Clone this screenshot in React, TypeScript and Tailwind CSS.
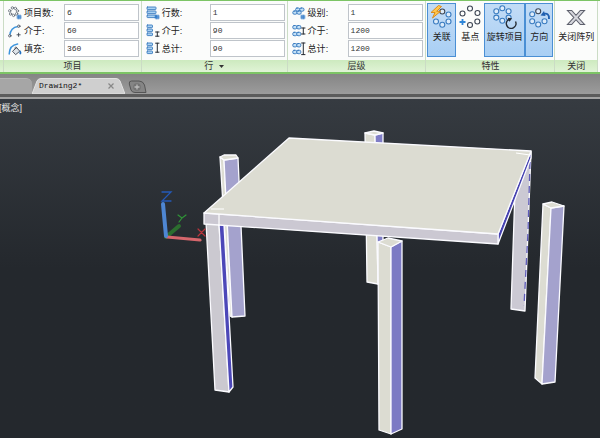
import React from 'react';

type Field = { id: string; label: string; value: string; icon: React.ReactNode };

const BLUE = '#3a7cc0';
const INK = '#3d4654';

// --- Small 14px field icons ---
const Icon = ({ children }: { children: React.ReactNode }) => (
  <svg viewBox="0 0 14 14" className="h-3.5 w-3.5 shrink-0" fill="none" strokeLinecap="round" aria-hidden="true">
    {children}
  </svg>
);

const Bars = ({ w = 8, ys = [1, 5, 9] }: { w?: number; ys?: number[] }) => (
  <>
    {ys.map((y) => (
      <rect key={y} x="1" y={y} width={w} height="2.6" rx="0.6" fill="#a9d2f2" stroke={BLUE} strokeWidth="0.9" />
    ))}
  </>
);

const Hash = ({ x, y }: { x: number; y: number }) => (
  <path d={`M${x + 1.2} ${y}v4M${x + 3} ${y}v4M${x} ${y + 1.1}h4.2M${x} ${y + 2.9}h4.2`} stroke="#1f6fc4" strokeWidth="0.9" />
);

const ItemCountIcon = () => (
  <Icon>
    {[[4.4, 1.9], [7.4, 2.4], [9.4, 4.9], [8.6, 7.8], [5.6, 9.4], [2.6, 8], [1.7, 4.8]].map(([cx, cy]) => (
      <circle key={`${cx}-${cy}`} cx={cx} cy={cy} r="1.2" stroke="#5b6470" strokeWidth="0.8" fill="#fff" />
    ))}
    <Hash x={9} y={9} />
  </Icon>
);

const BetweenIcon = () => (
  <Icon>
    <path d="M1.8 11.5C2.2 6.5 5 3 10 2.4" stroke="#3d95dd" strokeWidth="1.5" />
    <circle cx="1.8" cy="11.8" r="1.2" fill="#fff" stroke={INK} strokeWidth="0.8" />
    <circle cx="10.8" cy="2.2" r="1.2" fill="#fff" stroke={INK} strokeWidth="0.8" />
    <path d="M10.6 9.2v3.2M9 10.8h3.2" stroke={INK} strokeWidth="0.9" />
  </Icon>
);

const FillIcon = () => (
  <Icon>
    <path d="M1.2 12C1.4 6.5 4 2.8 9.6 2" stroke="#3d95dd" strokeWidth="1.5" />
    <path d="M4.8 9l3.8-3.4 3.2 3.6-3.9 3.2z" fill="#dfe5ea" stroke={INK} strokeWidth="0.9" />
    <path d="M7 6.6c-.4-2 1.6-2.4 2-.4" stroke={INK} strokeWidth="0.8" />
    <path d="M12.3 8.2c1.5 2 1.3 4.2 0 4.2s-1.200-2.200 0-4.200z" fill="#1f6fc4" />
  </Icon>
);

const IBeam = ({ y1, y2 }: { y1: number; y2: number }) => (
  <path d={`M9.6 ${y1}h3.4M9.6 ${y2}h3.4M11.3 ${y1}V${y2}`} stroke="#252b33" strokeWidth="1" />
);

const RowCountIcon = () => (
  <Icon>
    <Bars w={9} />
    <Hash x={9} y={9} />
  </Icon>
);
const RowBetweenIcon = () => (
  <Icon>
    <Bars w={5.5} />
    <IBeam y1={8} y2={12.2} />
  </Icon>
);
const RowTotalIcon = () => (
  <Icon>
    <Bars w={5.5} />
    <IBeam y1={1.2} y2={10.2} />
  </Icon>
);

const Links = ({ y }: { y: number }) => (
  <g fill="#c4e1f7" stroke={BLUE} strokeWidth="1">
    <rect x="0.8" y={y} width="4" height="3.4" rx="1.3" />
    <rect x="4.8" y={y} width="4" height="3.4" rx="1.3" />
  </g>
);

const LevelCountIcon = () => (
  <Icon>
    <g fill="#c4e1f7" stroke={BLUE} strokeWidth="1">
      <rect x="3.6" y="2" width="4.2" height="3.2" rx="1.4" />
      <rect x="7.8" y="2" width="4.2" height="3.2" rx="1.4" />
      <rect x="0.8" y="5" width="4.2" height="3.2" rx="1.4" />
      <rect x="5" y="5" width="4.2" height="3.2" rx="1.4" />
    </g>
    <Hash x={8.8} y={9} />
  </Icon>
);
const LevelBetweenIcon = () => (
  <Icon>
    <Links y={1.5} />
    <Links y={8.3} />
    <IBeam y1={4} y2={10} />
  </Icon>
);
const LevelTotalIcon = () => (
  <Icon>
    <Links y={1.5} />
    <Links y={8.3} />
    <IBeam y1={1} y2={12.6} />
  </Icon>
);

// --- Large 24px tool icons ---
const BigIcon = ({ children }: { children: React.ReactNode }) => (
  <svg viewBox="0 0 24 24" className="h-6 w-6 shrink-0" fill="none" aria-hidden="true">
    {children}
  </svg>
);

const Ring = ({ pts, color }: { pts: number[][]; color: string }) => (
  <>
    {pts.map(([cx, cy]) => (
      <circle key={`${cx}-${cy}`} cx={cx} cy={cy} r="2.5" stroke={color} strokeWidth="1.1" fill="#fff" fillOpacity="0.5" />
    ))}
  </>
);

const AssociateIcon = () => (
  <BigIcon>
    <Ring color={BLUE} pts={[[18.5, 9.5], [18.5, 16.5], [12.3, 19.7], [6, 16.5]]} />
    <Ring color={INK} pts={[[12.3, 6.5]]} />
    <path d="M8.500.5L1 7.500h4L2.500 13 10.500 6.300H6.700L11.500 1.500z" fill="#ffc74d" stroke="#d98512" strokeWidth="0.9" />
  </BigIcon>
);

const BasePointIcon = () => (
  <BigIcon>
    <Ring color={INK} pts={[[12, 3.5], [4.5, 8.5], [19.5, 8], [19.3, 16.5], [12, 20]]} />
    <path d="M4.5 14v6M1.5 17h6" stroke="#2f86d8" strokeWidth="1.8" />
  </BigIcon>
);

const RotateIcon = () => (
  <BigIcon>
    <Ring color={BLUE} pts={[[9.3, 3.3], [15.6, 6.3], [15.6, 12.6], [9.3, 15.8], [3.3, 12.6], [3.3, 6.3]]} />
    <path d="M15.800 14.400A4.800 4.800 0 1 0 22.500 16.500" stroke="#252b33" strokeWidth="1.5" />
    <path d="M14.500 12.800l4.600.4-2.600 3.600z" fill="#252b33" />
  </BigIcon>
);

const DirectionIcon = () => (
  <BigIcon>
    <Ring color={INK} pts={[[11.2, 6.2]]} />
    <Ring color={BLUE} pts={[[5.2, 9.3], [5.2, 16.3], [11.2, 19.5], [17.5, 16.3]]} />
    <path d="M22 14c.5-4.500-2-6.200-5.500-5" stroke="#1f5fb0" strokeWidth="1.9" />
    <path d="M13.500 10.500l3.500-4.500 1.500 5z" fill="#1f5fb0" />
  </BigIcon>
);

const CloseIcon = () => (
  <BigIcon>
    <path
      d="M3.5 5.500h4.200l4.300 4.800 4.300-4.800h4.200l-6.300 7 6.300 7h-4.200L12 14.700l-4.300 4.800H3.500l6.300-7z"
      fill="#d5d6dc"
      stroke="#5d606c"
      strokeWidth="1.1"
    />
  </BigIcon>
);

const itemFields: Field[] = [
  { id: 'items', label: '项目数', value: '6', icon: <ItemCountIcon /> },
  { id: 'item-between', label: '介于', value: '60', icon: <BetweenIcon /> },
  { id: 'item-fill', label: '填充', value: '360', icon: <FillIcon /> },
];

const rowFields: Field[] = [
  { id: 'rows', label: '行数', value: '1', icon: <RowCountIcon /> },
  { id: 'row-between', label: '介于', value: '90', icon: <RowBetweenIcon /> },
  { id: 'row-total', label: '总计', value: '90', icon: <RowTotalIcon /> },
];

const levelFields: Field[] = [
  { id: 'levels', label: '级别', value: '1', icon: <LevelCountIcon /> },
  { id: 'level-between', label: '介于', value: '1200', icon: <LevelBetweenIcon /> },
  { id: 'level-total', label: '总计', value: '1200', icon: <LevelTotalIcon /> },
];

const Caption = ({ children }: { children: React.ReactNode }) => (
  <div className="flex h-3 items-center justify-center gap-1.5 bg-linear-to-b from-[#cdeabf] to-[#e0f3d6] text-[9px] leading-3 text-[#333]">
    {children}
  </div>
);

const FieldRows = ({ fields, labelWidth = 'w-[42px]' }: { fields: Field[]; labelWidth?: string }) => (
  <div className="flex grow flex-col gap-px pt-[3px] pr-0.5 pl-1">
    {fields.map((f) => (
      <div key={f.id} className="flex h-[17px] items-center">
        {f.icon}
        <label htmlFor={f.id} className={`${labelWidth} shrink-0 pl-0.5 text-[9px] leading-3 whitespace-nowrap text-[#222]`}>
          {f.label}:
        </label>
        <input
          id={f.id}
          defaultValue={f.value}
          className="h-[17px] w-0 min-w-0 grow border border-[#bfc4ca] bg-white px-0.5 font-['Liberation_Mono',monospace] text-[8px] text-[#333] outline-none"
        />
      </div>
    ))}
  </div>
);

const ToolButton = ({ label, icon, active = false }: { label: string; icon: React.ReactNode; active?: boolean }) => (
  <button
    type="button"
    className={`flex h-[54px] grow flex-col items-center border pt-px text-[9px] leading-3 whitespace-nowrap text-[#222] ${
      active ? 'border-[#4a8fd4] bg-linear-to-b from-[#c3dcf6] to-[#a9cff4]' : 'border-transparent'
    }`}
  >
    {icon}
    <span className="mt-0.5">{label}</span>
  </button>
);

const Leg = ({ points, fill }: { points: string; fill: string }) => (
  <polygon points={points} fill={fill} stroke="#fbfbff" strokeWidth="1.3" strokeLinejoin="round" />
);

const Scene = () => (
  <svg viewBox="0 99 600 339" className="h-full w-full" role="img" aria-label="Table model">
    {/* rear legs */}
    <Leg points="220,157 224,160 232,317 230,316" fill="#dcdcd2" />
    <Leg points="224,160 238,158 245,316 232,317" fill="#a4a2cd" />
    <Leg points="220,157 224,155 236,155 238,158 224,160" fill="#dcdcd2" />
    <Leg points="365,133 375,135 378,284 367,282" fill="#dcdcd2" />
    <Leg points="375,135 383,133 383,284 378,284" fill="#7f7dc6" />
    <Leg points="365,133 374,131 383,133 375,135" fill="#dcdcd2" />
    <Leg points="531,152 525,311 511,309 515,190" fill="#cbc9d3" />
    <path d="M530 162L528 232L524 306" stroke="#5e5bb9" strokeWidth="1.3" strokeDasharray="7 5" fill="none" />

    {/* front left leg */}
    <Leg points="206,222 219,224 229,392 215,390" fill="#cbc9d0" />
    <Leg points="219,224 224,225 233,387 229,392" fill="#4c47b8" />

    {/* table top */}
    <Leg points="531,151 531,158 498,244 498,234" fill="#4642b0" />
    <Leg points="204,213 498,234 498,244 204,224" fill="#cbc8d2" />
    <Leg points="289,138 531,151 498,234 204,213" fill="#dcdcd2" />
    <path d="M211 209H224M219 214V226M516 153L530 155" stroke="#fff" strokeWidth="1.2" fill="none" />

    {/* front legs */}
    <Leg points="378,242 391,247 391,434 379,430" fill="#dcdcd2" />
    <Leg points="391,247 402,241 402,429 391,434" fill="#7c7ac4" />
    <Leg points="378,242 388,238 402,241 391,247" fill="#dcdcd2" />
    <Leg points="543,204 551,208 542,384 535,378" fill="#dcdcd2" />
    <Leg points="551,208 564,206 555,382 542,384" fill="#a4a2cd" />
    <Leg points="543,204 552,202 564,206 551,208" fill="#dcdcd2" />

    {/* axes */}
    <g strokeLinecap="round" fill="none">
      <path d="M166 237L179 226" stroke="#2c6e2f" strokeWidth="4" />
      <path d="M167 237L200 240" stroke="#d5666c" strokeWidth="3" />
      <path d="M163 204L166 236" stroke="#4e86d2" strokeWidth="4" />
      <path d="M162 192H171L162 201H171" stroke="#2459b8" strokeWidth="1.3" />
      <path d="M178 215L182 218L186 215M182 218L179 222" stroke="#2f9437" strokeWidth="1.2" />
      <path d="M198 229L205 236M205 229L198 236" stroke="#b8343c" strokeWidth="1.2" />
    </g>
  </svg>
);

export default function App() {
  return (
    <div className="flex min-h-screen flex-col bg-[#24282d] font-['Liberation_Sans','Noto_Sans_CJK_SC',sans-serif]">
      <header className="flex border-y border-[#7cc465] border-b-2 bg-[#fbfcfb] pr-0.5">
        <div className="flex w-[3px] flex-col justify-end">
          <Caption>{null}</Caption>
        </div>
        <section className="flex h-[71px] flex-[138_1_0%] flex-col border-l border-[#cbdcc5]">
          <FieldRows fields={itemFields} />
          <Caption>项目</Caption>
        </section>
        <section className="flex h-[71px] flex-[146_1_0%] flex-col border-l border-[#cbdcc5]">
          <FieldRows fields={rowFields} labelWidth="w-[50px]" />
          <Caption>
            行
            <svg viewBox="0 0 5 3" className="h-[3px] w-[5px]" aria-hidden="true">
              <path d="M0 0h5L2.5 3z" fill="#333" />
            </svg>
          </Caption>
        </section>
        <section className="flex h-[71px] flex-[139_1_0%] flex-col border-l border-[#cbdcc5]">
          <FieldRows fields={levelFields} />
          <Caption>层级</Caption>
        </section>
        <section className="flex h-[71px] flex-[129_1_0%] flex-col border-l border-[#cbdcc5]">
          <div className="flex grow px-px pt-0.5">
            <ToolButton label="关联" icon={<AssociateIcon />} active />
            <ToolButton label="基点" icon={<BasePointIcon />} />
            <ToolButton label="旋转项目" icon={<RotateIcon />} active />
            <ToolButton label="方向" icon={<DirectionIcon />} active />
          </div>
          <Caption>特性</Caption>
        </section>
        <section className="flex h-[71px] flex-[42_1_0%] flex-col border-x border-[#cbdcc5]">
          <div className="flex grow pt-0.5">
            <ToolButton label="关闭阵列" icon={<CloseIcon />} />
          </div>
          <Caption>关闭</Caption>
        </section>
      </header>

      <nav className="flex h-[25px] items-end border-b-2 border-[#a3a3a3] bg-[#929292]">
        <div className="flex h-full w-full items-end border-b-3 border-[#5c5c5c] bg-linear-to-b from-[#858585] to-[#9c9c9c] pt-1">
          <div className="h-4 w-8 shrink-0 rounded-tr-md border-t border-[#b4b4b4] bg-[#a6a6a6]" />
          <div className="relative flex h-4 w-[93px] shrink-0 items-center justify-between pr-2 pl-[7px]">
            <svg viewBox="0 0 93 16" preserveAspectRatio="none" className="absolute inset-0 h-full w-full" aria-hidden="true">
              <path d="M0 16L5 3Q6 .5 9 .5H84Q87 .5 88 3L93 16z" fill="#cfcfcf" stroke="#e2e2e2" />
            </svg>
            <a href="#drawing2" className="relative font-['Liberation_Mono',monospace] text-[8px] text-[#111]">
              Drawing2*
            </a>
            <button type="button" aria-label="Close tab" className="relative flex h-3 w-3 items-center justify-center">
              <svg viewBox="0 0 6 6" className="h-1.5 w-1.5" aria-hidden="true">
                <path d="M.5.5l5 5M5.5.5l-5 5" stroke="#888" strokeWidth="1.2" />
              </svg>
            </button>
          </div>
          <button type="button" aria-label="New tab" className="ml-0.5 h-3.5 w-5 shrink-0">
            <svg viewBox="0 0 20 14" className="h-3.5 w-5" aria-hidden="true">
              <path d="M4.500 1H12q4 0 5.500 4L19 12.500H8Q5 12.500 4 10L2.300 4Q1.800 1 4.500 1z" fill="#858585" stroke="#555" />
              <circle cx="10" cy="7" r="3.800" fill="#747474" />
              <path d="M10 4.500v5M7.500 7h5" stroke="#bbb" strokeWidth="1.300" />
            </svg>
          </button>
        </div>
      </nav>

      <main className="relative flex grow flex-col bg-linear-to-b from-[#363b41] to-[#24282d] to-50%">
        <Scene />
        <span className="absolute top-[3px] -left-px text-[9px] leading-3 text-[#e4e4e4]">[概念]</span>
      </main>
    </div>
  );
}
